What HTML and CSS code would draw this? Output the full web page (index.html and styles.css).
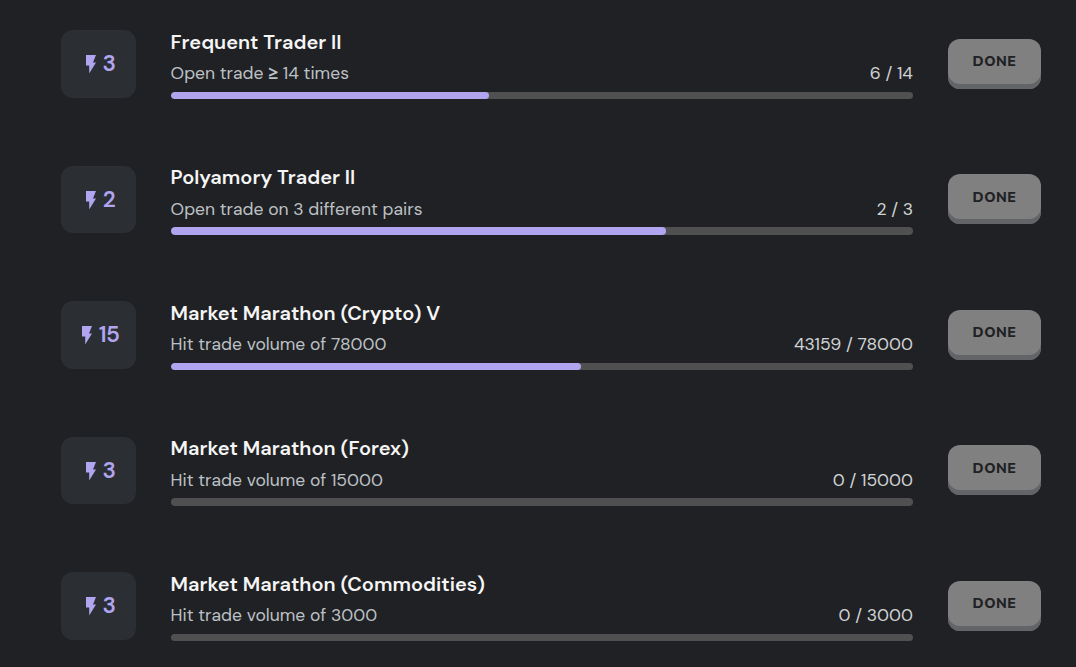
FILE: index.html
```html
<!DOCTYPE html>
<html lang="en">
<head>
    <meta charset="UTF-8">
    <meta name="viewport" content="width=device-width, initial-scale=1.0">
    <title>Quests</title>
    <link rel="stylesheet" href="styles.css">
</head>
<body>
    <svg class="icon-defs">
        <symbol id="bolt" viewBox="0 0 10 19">
            <path d="M0 0H10L7 7.5H10L3.2 18.5V10.5H0Z"/>
        </symbol>
    </svg>

    <div class="quest-list">
        <div class="quest">
            <div class="points"><svg class="bolt"><use href="#bolt"/></svg><span>3</span></div>
            <div class="quest-info">
                <h3>Frequent Trader II</h3>
                <div class="quest-row">
                    <p>Open trade <span class="symbol">≥</span> 14 times</p>
                    <span class="count">6 / 14</span>
                </div>
                <div class="progress"><div class="progress-bar" style="width: 42.86%"></div></div>
            </div>
            <button class="btn" disabled>DONE</button>
        </div>

        <div class="quest">
            <div class="points"><svg class="bolt"><use href="#bolt"/></svg><span>2</span></div>
            <div class="quest-info">
                <h3>Polyamory Trader II</h3>
                <div class="quest-row">
                    <p>Open trade on 3 different pairs</p>
                    <span class="count">2 / 3</span>
                </div>
                <div class="progress"><div class="progress-bar" style="width: 66.67%"></div></div>
            </div>
            <button class="btn" disabled>DONE</button>
        </div>

        <div class="quest">
            <div class="points"><svg class="bolt"><use href="#bolt"/></svg><span>15</span></div>
            <div class="quest-info">
                <h3>Market Marathon (Crypto) V</h3>
                <div class="quest-row">
                    <p>Hit trade volume of 78000</p>
                    <span class="count">43159 / 78000</span>
                </div>
                <div class="progress"><div class="progress-bar" style="width: 55.33%"></div></div>
            </div>
            <button class="btn" disabled>DONE</button>
        </div>

        <div class="quest">
            <div class="points"><svg class="bolt"><use href="#bolt"/></svg><span>3</span></div>
            <div class="quest-info">
                <h3>Market Marathon (Forex)</h3>
                <div class="quest-row">
                    <p>Hit trade volume of 15000</p>
                    <span class="count">0 / 15000</span>
                </div>
                <div class="progress"><div class="progress-bar" style="width: 0%"></div></div>
            </div>
            <button class="btn" disabled>DONE</button>
        </div>

        <div class="quest">
            <div class="points"><svg class="bolt"><use href="#bolt"/></svg><span>3</span></div>
            <div class="quest-info">
                <h3>Market Marathon (Commodities)</h3>
                <div class="quest-row">
                    <p>Hit trade volume of 3000</p>
                    <span class="count">0 / 3000</span>
                </div>
                <div class="progress"><div class="progress-bar" style="width: 0%"></div></div>
            </div>
            <button class="btn" disabled>DONE</button>
        </div>
    </div>
</body>
</html>
```
FILE: styles.css
```css
* {
    margin: 0;
    padding: 0;
    box-sizing: border-box;
    font-family: 'DM Sans', 'Inter', sans-serif;
}

body {
    background: #202124;
    height: 100vh;
    overflow: hidden;
}

.icon-defs {
    display: none;
}

.quest-list {
    display: flex;
    flex-direction: column;
    gap: 63.5px;
    padding: 27.9px 35px 0 61px;
}

.quest {
    display: flex;
    align-items: center;
    height: 72px;
}

.points {
    display: flex;
    align-items: center;
    justify-content: center;
    gap: 7px;
    width: 75px;
    height: 67.6px;
    padding-left: 4px;
    border-radius: 12px;
    background: #2b2e32;
    color: #b1a5f0;
    font-size: 22.5px;
    font-weight: 600;
    letter-spacing: -0.6px;
}

.bolt {
    width: 10px;
    height: 19px;
    margin-top: 2px;
    fill: #b1a5f0;
}

.quest-info {
    flex: 1;
    height: 72px;
    margin: 0 35px 0 34.6px;
}

h3 {
    color: #f5f5f5;
    font-size: 20px;
    font-weight: 600;
    line-height: 28px;
}

.quest-row {
    display: flex;
    justify-content: space-between;
    margin-top: 3.2px;
    color: #bdc1c6;
    font-size: 17.5px;
    line-height: 28px;
}

.symbol {
    font-family: 'Open Sans', sans-serif;
    font-weight: 700;
    line-height: 1;
}

.count {
    color: #d0d3d6;
}

.progress {
    height: 7.4px;
    margin-top: 4.8px;
    border-radius: 4px;
    background: #505050;
    overflow: hidden;
}

.progress-bar {
    height: 100%;
    border-radius: 4px;
    background: #b1a5f0;
}

.btn {
    width: 93px;
    height: 50px;
    padding-bottom: 4.6px;
    border: none;
    border-radius: 12px;
    background: #808080;
    box-shadow: inset 0 -5px 0 #626467;
    color: #202124;
    font-family: 'Nunito Sans', 'Open Sans', sans-serif;
    font-size: 14.3px;
    font-weight: 800;
    letter-spacing: 0.5px;
}
```
